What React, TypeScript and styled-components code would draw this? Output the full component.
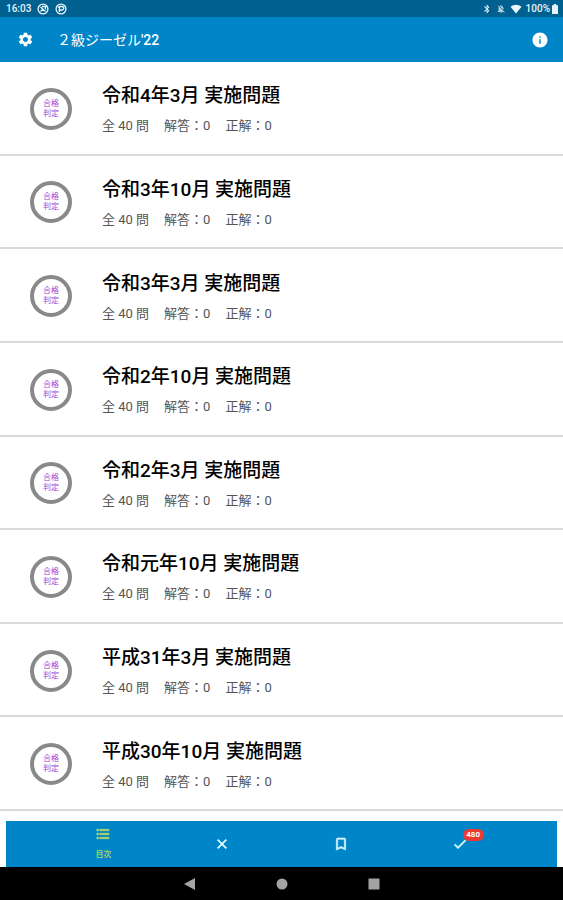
import React from 'react';
import styled, { createGlobalStyle } from 'styled-components';
import {
  MdSettings,
  MdInfo,
  MdFormatListBulleted,
  MdClose,
  MdBookmarkBorder,
  MdCheck,
  MdBluetooth,
  MdNotificationsOff,
} from 'react-icons/md';

const GlobalStyle = createGlobalStyle`
  * { box-sizing: border-box; }
  body {
    margin: 0;
    background: #fff;
    font-family: Roboto, "Noto Sans CJK JP", sans-serif;
  }
  button { font: inherit; border: 0; padding: 0; background: none; cursor: pointer; }
`;

const Page = styled.div`
  display: flex;
  flex-direction: column;
  min-height: 100vh;
`;

const StatusBar = styled.div`
  display: flex;
  align-items: center;
  justify-content: space-between;
  height: 17px;
  padding: 0 5px 0 6px;
  background: #00608f;
  color: #e8f4fa;
  font-size: 10px;
  font-weight: 500;
  line-height: 18px;
`;

const StatusGroup = styled.div<{ $gap: number }>`
  display: flex;
  align-items: center;
  gap: ${({ $gap }) => $gap}px;
`;

const Charge = styled.span`
  display: flex;
  align-items: center;
  gap: 2px;
`;

const AppBar = styled.header`
  display: flex;
  align-items: center;
  height: 45px;
  padding: 0 14px 0 17px;
  background: #0086c8;
  color: #fff;
`;

const IconButton = styled.button`
  display: flex;
  color: #fff;
`;

const AppTitle = styled.h1`
  flex: 1;
  margin: 0;
  padding: 1px 0 0 23px;
  font-size: 14px;
  font-weight: 400;
  line-height: 20px;
`;

const Year = styled.span`
  font-weight: 500;
`;

const ExamList = styled.ul`
  flex: 1;
  display: flex;
  flex-direction: column;
  margin: 0;
  padding: 0;
  list-style: none;
`;

const ExamRow = styled.li`
  flex: 1;
  display: flex;
  border-bottom: 2px solid #dadada;
`;

const ExamButton = styled.button`
  flex: 1;
  display: flex;
  align-items: center;
  gap: 30px;
  padding: 2px 30px 0;
  text-align: left;
`;

const Verdict = styled.span`
  display: flex;
  align-items: center;
  justify-content: center;
  flex: none;
  width: 42px;
  height: 42px;
  border: 4px solid #898989;
  border-radius: 50%;
  color: #a23fd6;
  font-size: 8px;
  line-height: 10px;
  text-align: center;
`;

const ExamText = styled.span`
  display: flex;
  flex-direction: column;
  gap: 3px;
`;

const ExamTitle = styled.span`
  color: #000;
  font-size: 19px;
  font-weight: 500;
  line-height: 32px;
`;

const ExamCounts = styled.span`
  display: flex;
  gap: 15px;
  color: #555;
  font-size: 13px;
  line-height: 22px;
`;

const TabBar = styled.nav`
  display: flex;
  height: 46px;
  margin: 10px 6px 0;
  padding: 0 38px;
  background: #0086c8;
`;

const Tab = styled.button<{ $active?: boolean }>`
  flex: 1;
  display: flex;
  flex-direction: column;
  align-items: center;
  justify-content: center;
  gap: 6px;
  color: ${({ $active }) => ($active ? '#b4d868' : '#d8f3fc')};

  path:not([fill='none']) {
    stroke-width: 1px;
  }
`;

const TabLabel = styled.span`
  font-size: 8px;
  font-weight: 500;
  line-height: 14px;
`;

const BadgeAnchor = styled.span`
  position: relative;
  display: flex;
`;

const Badge = styled.span`
  position: absolute;
  left: 11px;
  top: -7px;
  width: 21px;
  height: 12px;
  border-radius: 6px;
  background: #ee3a2e;
  color: #fff;
  font-size: 8px;
  font-weight: 700;
  line-height: 12px;
  text-align: center;
`;

const SystemNav = styled.nav`
  display: grid;
  grid-template-columns: repeat(3, 92px);
  justify-content: center;
  align-items: center;
  height: 33px;
  background: #000;
`;

const SystemButton = styled.button`
  display: flex;
  justify-content: center;
`;

const exams = [
  '令和4年3月 実施問題',
  '令和3年10月 実施問題',
  '令和3年3月 実施問題',
  '令和2年10月 実施問題',
  '令和2年3月 実施問題',
  '令和元年10月 実施問題',
  '平成31年3月 実施問題',
  '平成30年10月 実施問題',
];

function NoticeIcon({ mark }: { mark: string }) {
  return (
    <svg width="12" height="12" viewBox="0 0 24 24" fill="none" stroke="currentColor" strokeWidth="2.6" aria-hidden="true">
      <circle cx="12" cy="12" r="9.8" />
      <path d={mark} />
    </svg>
  );
}

function WifiIcon() {
  return (
    <svg width="12" height="10" viewBox="0 0 12 10" fill="currentColor" aria-hidden="true">
      <path d="M6 9.5 0.5 2.8C3.6 0 8.4 0 11.5 2.8Z" />
    </svg>
  );
}

function BatteryIcon() {
  return (
    <svg width="6" height="10" viewBox="0 0 6 10" fill="currentColor" aria-hidden="true">
      <path d="M1.8 0h2.4v1.2H6V10H0V1.2h1.8Z" />
    </svg>
  );
}

export default function App() {
  return (
    <>
      <GlobalStyle />
      <Page>
        <StatusBar>
          <StatusGroup $gap={6}>
            <Charge>16:03</Charge>
            <NoticeIcon mark="M7 8l10 9M10 7h7v6M7 17l5-5" />
            <NoticeIcon mark="M9 18V7h5a3 3 0 0 1 0 7H7M6 9l4-2" />
          </StatusGroup>
          <StatusGroup $gap={4}>
            <MdBluetooth size={10} />
            <MdNotificationsOff size={10} opacity={0.75} />
            <WifiIcon />
            <Charge>
              100%
              <BatteryIcon />
            </Charge>
          </StatusGroup>
        </StatusBar>
        <AppBar>
          <IconButton aria-label="設定">
            <MdSettings size={17} />
          </IconButton>
          <AppTitle>
            ２級ジーゼル<Year>'22</Year>
          </AppTitle>
          <IconButton aria-label="情報">
            <MdInfo size={18} />
          </IconButton>
        </AppBar>
        <ExamList>
          {exams.map((title) => (
            <ExamRow key={title}>
              <ExamButton>
                <Verdict>
                  合格
                  <br />
                  判定
                </Verdict>
                <ExamText>
                  <ExamTitle>{title}</ExamTitle>
                  <ExamCounts>
                    <span>全 40 問</span>
                    <span>解答：0</span>
                    <span>正解：0</span>
                  </ExamCounts>
                </ExamText>
              </ExamButton>
            </ExamRow>
          ))}
        </ExamList>
        <TabBar>
          <Tab $active>
            <MdFormatListBulleted size={16} />
            <TabLabel>目次</TabLabel>
          </Tab>
          <Tab aria-label="不正解">
            <MdClose size={16} />
          </Tab>
          <Tab aria-label="しおり">
            <MdBookmarkBorder size={16} />
          </Tab>
          <Tab aria-label="正解">
            <BadgeAnchor>
              <MdCheck size={16} />
              <Badge>480</Badge>
            </BadgeAnchor>
          </Tab>
        </TabBar>
        <SystemNav>
          <SystemButton aria-label="戻る">
            <svg width="12" height="12" viewBox="0 0 12 12" fill="#a3a3a3">
              <path d="M11 0v12L0 6Z" />
            </svg>
          </SystemButton>
          <SystemButton aria-label="ホーム">
            <svg width="12" height="12" viewBox="0 0 12 12" fill="#a3a3a3">
              <circle cx="6" cy="6" r="5.5" />
            </svg>
          </SystemButton>
          <SystemButton aria-label="履歴">
            <svg width="12" height="12" viewBox="0 0 12 12" fill="#a3a3a3">
              <rect x="0.5" y="0.5" width="11" height="11" />
            </svg>
          </SystemButton>
        </SystemNav>
      </Page>
    </>
  );
}
